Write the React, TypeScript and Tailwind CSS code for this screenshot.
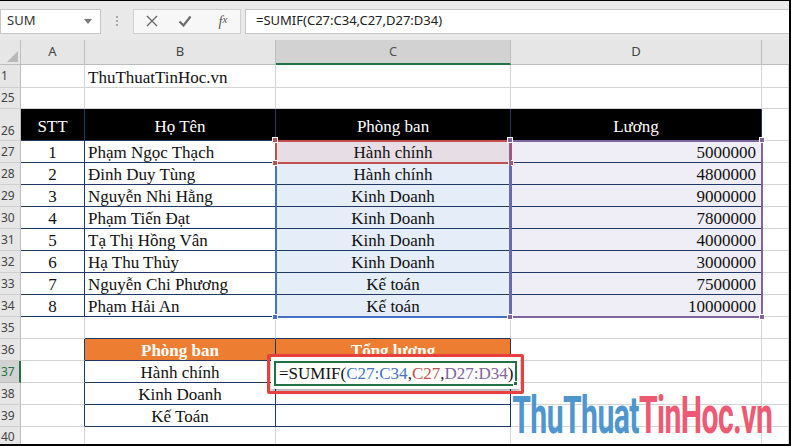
import React from 'react';
import { twMerge } from 'tailwind-merge';

const staff: [number, string, string, number][] = [
  [1, 'Phạm Ngọc Thạch', 'Hành chính', 5000000],
  [2, 'Đinh Duy Tùng', 'Hành chính', 4800000],
  [3, 'Nguyễn Nhi Hằng', 'Kinh Doanh', 9000000],
  [4, 'Phạm Tiến Đạt', 'Kinh Doanh', 7800000],
  [5, 'Tạ Thị Hồng Vân', 'Kinh Doanh', 4000000],
  [6, 'Hạ Thu Thủy', 'Kinh Doanh', 3000000],
  [7, 'Nguyễn Chi Phương', 'Kế toán', 7500000],
  [8, 'Phạm Hải An', 'Kế toán', 10000000],
];

const GRID_R = 'border-r-[#d4d4d4]';
const GRID_B = 'border-b-[#d4d4d4]';
const NAVY_R = 'border-r-[#1f3864]';
const NAVY_B = 'border-b-[#1f3864]';

function Cell({
  w,
  r = GRID_R,
  b = GRID_B,
  className = '',
  children,
}: {
  w: string;
  r?: string;
  b?: string;
  className?: string;
  children?: React.ReactNode;
}) {
  return (
    <div
      className={twMerge(
        'shrink-0 h-full flex items-end border-r border-b overflow-visible whitespace-nowrap',
        w,
        r,
        b,
        className
      )}
    >
      {children}
    </div>
  );
}

function RowHead({ label, active = false }: { label: string; active?: boolean }) {
  return (
    <div
      className={
        active
          ? "w-[21px] shrink-0 h-full flex items-center pl-[1px] bg-[#d2d2d2] border-r-2 border-r-[#217346] border-b border-b-[#bdbdbd] text-[12px] leading-[16px] text-[#217346] font-['Noto_Sans',sans-serif]"
          : "w-[21px] shrink-0 h-full flex items-center pl-[1px] bg-[#e6e6e6] border-r border-r-[#bdbdbd] border-b border-b-[#cfcfcf] text-[12px] leading-[16px] text-[#444] font-['Noto_Sans',sans-serif]"
      }
    >
      {label}
    </div>
  );
}

// range highlight drawn over the cells while the formula is being edited
function Range({ cls, handles }: { cls: string; handles: string[] }) {
  return (
    <>
      <div className={twMerge('absolute border-2 pointer-events-none', cls)} />
      {handles.map((h, i) => (
        <div key={i} className={twMerge('absolute w-[6px] h-[6px] border border-white pointer-events-none', h)} />
      ))}
    </>
  );
}

export default function App() {
  return (
    <div className="relative w-[791px] h-[446px] overflow-hidden bg-white border-t border-r-2 border-b-2 border-black font-['Noto_Sans','Open_Sans',sans-serif]">
      {/* Formula bar */}
      <div className="h-[39px] bg-[#e9e9e9] flex items-center pt-[1px]">
        <div className="w-[101px] h-[25px] bg-white border border-[#c6c6c6] flex items-center justify-between pl-[6px] pr-[8px] text-[13px] text-[#333]">
          <span>SUM</span>
          <svg width="8" height="5" viewBox="0 0 8 5">
            <path d="M0 0h8L4 5z" fill="#7a7a7a" />
          </svg>
        </div>
        <div className="w-[32px] flex flex-col items-center gap-[2px]">
          <span className="w-[2px] h-[2px] bg-[#a8a8a8]" />
          <span className="w-[2px] h-[2px] bg-[#a8a8a8]" />
          <span className="w-[2px] h-[2px] bg-[#a8a8a8]" />
        </div>
        <div className="w-[108px] h-[25px] bg-[#f7f7f7] border border-[#d0d0d0] flex items-center">
          <div className="w-[36px] flex justify-center">
            <svg width="12" height="12" viewBox="0 0 12 12">
              <path d="M1 1l10 10M11 1L1 11" stroke="#6b6b6b" strokeWidth="1.4" />
            </svg>
          </div>
          <div className="w-[30px] flex justify-center">
            <svg width="14" height="12" viewBox="0 0 14 12">
              <path d="M1.5 6.5l4 4L12.5 1.5" stroke="#6b6b6b" strokeWidth="2.2" fill="none" />
            </svg>
          </div>
          <div className="flex-1 flex justify-center pl-[6px] text-[14px] italic text-[#555] font-['Liberation_Serif',serif]">
            f<span className="text-[11px]">x</span>
          </div>
        </div>
        <div className="ml-[4px] flex-1 h-[25px] bg-white border border-[#c6c6c6] border-r-0 flex items-center pl-[10px] text-[13px] text-[#222]">
          =SUMIF(C27:C34,C27,D27:D34)
        </div>
      </div>

      {/* Column headers */}
      <div className="flex h-[25px] text-[13px] text-[#444]">
        <div className="w-[21px] shrink-0 h-full bg-[#e6e6e6] border-r border-b border-[#bdbdbd] flex items-end justify-end p-[2px]">
          <svg width="11" height="11" viewBox="0 0 11 11">
            <path d="M11 0v11H0z" fill="#b8b8b8" />
          </svg>
        </div>
        <div className="w-[64px] shrink-0 bg-[#e6e6e6] border-r border-b border-[#bdbdbd] flex items-center justify-center">A</div>
        <div className="w-[191px] shrink-0 bg-[#e6e6e6] border-r border-b border-[#bdbdbd] flex items-center justify-center">B</div>
        <div className="w-[235px] shrink-0 bg-[#d2d2d2] border-r border-r-[#bdbdbd] border-b-2 border-b-[#217346] flex items-center justify-center text-[#555]">C</div>
        <div className="w-[251px] shrink-0 bg-[#e6e6e6] border-r border-b border-[#bdbdbd] flex items-center justify-center">D</div>
        <div className="flex-1 bg-[#e6e6e6] border-b border-[#bdbdbd]" />
      </div>

      {/* Sheet rows */}
      <div className="text-[17px] leading-[19px] text-[#111] font-['Liberation_Serif','Times_New_Roman',serif]">
        <div className="flex h-[23px]">
          <RowHead label="1" />
          <Cell w="w-[64px]" />
          <Cell w="w-[191px]" className="pl-[3px]">ThuThuatTinHoc.vn</Cell>
          <Cell w="w-[235px]" />
          <Cell w="w-[251px]" />
          <Cell w="w-[27px]" />
        </div>
        <div className="flex h-[21px]">
          <RowHead label="25" />
          <Cell w="w-[64px]" />
          <Cell w="w-[191px]" />
          <Cell w="w-[235px]" />
          <Cell w="w-[251px]" />
          <Cell w="w-[27px]" />
        </div>
        <div className="flex h-[32px]">
          <div className="w-[21px] shrink-0 h-full flex items-end pb-[1px] pl-[1px] bg-[#e6e6e6] border-r border-r-[#bdbdbd] border-b border-b-[#cfcfcf] text-[12px] leading-[16px] text-[#444] font-['Noto_Sans',sans-serif]">
            26
          </div>
          <Cell w="w-[64px]" r={NAVY_R} b={NAVY_B} className="bg-black text-white justify-center pb-[4px]">STT</Cell>
          <Cell w="w-[191px]" r={NAVY_R} b={NAVY_B} className="bg-black text-white justify-center pb-[4px]">Họ Tên</Cell>
          <Cell w="w-[235px]" r={NAVY_R} b={NAVY_B} className="bg-black text-white justify-center pb-[4px]">Phòng ban</Cell>
          <Cell w="w-[251px]" r={NAVY_R} b={NAVY_B} className="bg-black text-white justify-center pb-[4px]">Lương</Cell>
          <Cell w="w-[27px]" />
        </div>
        {staff.map(([n, name, dept, pay], i) => (
          <div key={n} className="flex h-[22px]">
            <RowHead label={String(27 + i)} />
            <Cell w="w-[64px]" r={NAVY_R} b={NAVY_B} className="justify-center">{n}</Cell>
            <Cell w="w-[191px]" r={NAVY_R} b={NAVY_B} className="pl-[3px]">{name}</Cell>
            <Cell
              w="w-[235px]"
              r={NAVY_R}
              b={NAVY_B}
              className={i === 0 ? 'justify-center bg-[#e7dde4]' : 'justify-center bg-[#e4edf8]'}
            >
              {dept}
            </Cell>
            <Cell w="w-[251px]" r={NAVY_R} b={NAVY_B} className="justify-end pr-[5px] bg-[#efedf6]">{pay}</Cell>
            <Cell w="w-[27px]" />
          </div>
        ))}
        <div className="flex h-[22px]">
          <RowHead label="35" />
          <Cell w="w-[64px]" />
          <Cell w="w-[191px]" b={NAVY_B} />
          <Cell w="w-[235px]" b={NAVY_B} />
          <Cell w="w-[251px]" />
          <Cell w="w-[27px]" />
        </div>
        <div className="flex h-[22px]">
          <RowHead label="36" />
          <Cell w="w-[64px]" r={NAVY_R} />
          <Cell w="w-[191px]" r={NAVY_R} b={NAVY_B} className="bg-[#ed7d31] text-white font-bold justify-center">Phòng ban</Cell>
          <Cell w="w-[235px]" r={NAVY_R} b={NAVY_B} className="bg-[#ed7d31] text-white font-bold justify-center">Tổng lương</Cell>
          <Cell w="w-[251px]" />
          <Cell w="w-[27px]" />
        </div>
        {['Hành chính', 'Kinh Doanh', 'Kế Toán'].map((d, i) => (
          <div key={d} className="flex h-[22px]">
            <RowHead label={String(37 + i)} active={i === 0} />
            <Cell w="w-[64px]" r={NAVY_R} />
            <Cell w="w-[191px]" r={NAVY_R} b={NAVY_B} className="justify-center">{d}</Cell>
            <Cell w="w-[235px]" r={NAVY_R} b={NAVY_B} />
            <Cell w="w-[251px]" />
            <Cell w="w-[27px]" />
          </div>
        ))}
        <div className="flex h-[17px]">
          <div className="w-[21px] shrink-0 h-full pl-[1px] bg-[#e6e6e6] border-r border-r-[#bdbdbd] text-[12px] leading-[20px] text-[#444] font-['Noto_Sans',sans-serif]">
            40
          </div>
          <Cell w="w-[64px]" b="border-b-0" />
          <Cell w="w-[191px]" b="border-b-0" />
          <Cell w="w-[235px]" b="border-b-0" />
          <Cell w="w-[251px]" b="border-b-0" />
          <Cell w="w-[27px]" b="border-b-0" />
        </div>
      </div>

      {/* reference highlights */}
      <Range
        cls="left-[275px] top-[161px] w-[237px] h-[156px] border-[#4472c4]"
        handles={['left-[272px] top-[313px] bg-[#4472c4]']}
      />
      <Range
        cls="left-[275px] top-[139px] w-[237px] h-[24px] border-[#c0504d]"
        handles={[
          'left-[272px] top-[136px] bg-[#c0504d]',
          'left-[272px] top-[159px] bg-[#c0504d]',
          'left-[508px] top-[159px] bg-[#c0504d]',
        ]}
      />
      <Range
        cls="left-[509px] top-[139px] w-[254px] h-[178px] border-[#8064a2]"
        handles={[
          'left-[507px] top-[136px] bg-[#8064a2]',
          'left-[759px] top-[136px] bg-[#8064a2]',
          'left-[507px] top-[313px] bg-[#8064a2]',
          'left-[759px] top-[313px] bg-[#8064a2]',
        ]}
      />

      {/* cell editor for C37 */}
      <div className="absolute left-[271px] top-[355px] w-[249px] h-[33px] bg-white shadow-[0_2px_5px_rgba(0,0,0,0.4)]" />
      <div className="absolute left-[274px] top-[360px] w-[243px] h-[25px] border-2 border-[#217346] bg-white flex items-end pb-[1px] pl-[3px] text-[17px] leading-[19px] text-[#111] whitespace-nowrap font-['Liberation_Serif','Times_New_Roman',serif]">
        =SUMIF(<span className="text-[#4472c4]">C27:C34</span>,<span className="text-[#c0504d]">C27</span>,
        <span className="text-[#8064a2]">D27:D34</span>)
      </div>
      <div className="absolute left-[513px] top-[380px] w-[5px] h-[5px] bg-[#217346] border border-white" />
      <div className="absolute left-[267px] top-[353px] w-[257px] h-[40px] border-[3px] border-[#e8403f] rounded-[2px]" />

      {/* watermark */}
      <div className="absolute right-[17px] top-[389px] origin-right scale-x-[0.58] whitespace-nowrap text-[52px] leading-none font-bold tracking-[-1px] font-['Roboto',sans-serif] [text-shadow:0_0_2px_#fff]">
        <span className="text-[#4f96cf]">ThuThuat</span>
        <span className="text-[#ee5a73]">TinHoc.vn</span>
      </div>
    </div>
  );
}
